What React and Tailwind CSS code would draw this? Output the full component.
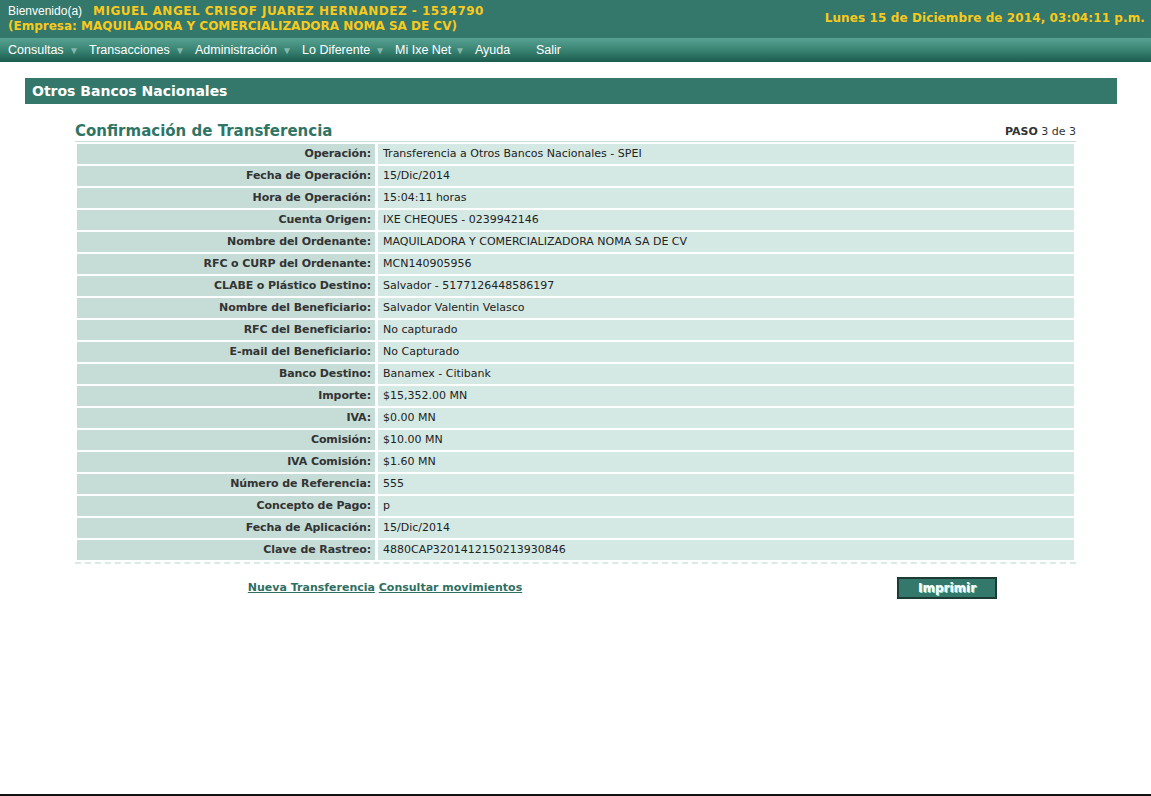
import React from "react";

const VERDANA = { fontFamily: "Verdana, 'DejaVu Sans', sans-serif" };

const MENU = [
  { label: "Consultas", arrow: true, w: "w-[81px]" },
  { label: "Transacciones", arrow: true, w: "w-[106px]" },
  { label: "Administración", arrow: true, w: "w-[107px]" },
  { label: "Lo Diferente", arrow: true, w: "w-[93px]" },
  { label: "Mi Ixe Net", arrow: true, w: "w-[80px]" },
  { label: "Ayuda", arrow: false, w: "w-[61px]" },
  { label: "Salir", arrow: false, w: "w-[40px]" },
];

const ROWS = [
  ["Operación:", "Transferencia a Otros Bancos Nacionales - SPEI"],
  ["Fecha de Operación:", "15/Dic/2014"],
  ["Hora de Operación:", "15:04:11 horas"],
  ["Cuenta Origen:", "IXE CHEQUES - 0239942146"],
  ["Nombre del Ordenante:", "MAQUILADORA Y COMERCIALIZADORA NOMA SA DE CV"],
  ["RFC o CURP del Ordenante:", "MCN140905956"],
  ["CLABE o Plástico Destino:", "Salvador - 5177126448586197"],
  ["Nombre del Beneficiario:", "Salvador Valentin Velasco"],
  ["RFC del Beneficiario:", "No capturado"],
  ["E-mail del Beneficiario:", "No Capturado"],
  ["Banco Destino:", "Banamex - Citibank"],
  ["Importe:", "$15,352.00 MN"],
  ["IVA:", "$0.00 MN"],
  ["Comisión:", "$10.00 MN"],
  ["IVA Comisión:", "$1.60 MN"],
  ["Número de Referencia:", "555"],
  ["Concepto de Pago:", "p"],
  ["Fecha de Aplicación:", "15/Dic/2014"],
  ["Clave de Rastreo:", "4880CAP3201412150213930846"],
];

function Header() {
  return (
    <div className="bg-[#33786a] h-[38px] flex justify-between pl-2 pr-[6px] pt-[3px]">
      <div className="text-[12px] leading-[15px]">
        <div>
          <span className="text-white font-['Liberation_Sans',Arial,sans-serif]">Bienvenido(a)</span>
          <span className="ml-[11px] font-bold text-[#f9c91c] tracking-[0.5px]" style={VERDANA}>
            MIGUEL ANGEL CRISOF JUAREZ HERNANDEZ - 1534790
          </span>
        </div>
        <div className="font-bold text-[#f9c91c]" style={VERDANA}>
          (Empresa: MAQUILADORA Y COMERCIALIZADORA NOMA SA DE CV)
        </div>
      </div>
      <div className="pt-[6px] text-[12px] font-bold text-[#f9c91c] tracking-[0.1px]" style={VERDANA}>
        Lunes 15 de Diciembre de 2014, 03:04:11 p.m.
      </div>
    </div>
  );
}

function MenuBar() {
  return (
    <div className="h-[24px] bg-gradient-to-b from-[#56a291] via-[#3a8474] to-[#1c5c4e] flex items-center pl-2 font-['Liberation_Sans',Arial,sans-serif] text-[12.5px] text-white">
      {MENU.map((m) => (
        <div key={m.label} className={`${m.w} flex items-center justify-between pr-[10px]`}>
          <span>{m.label}</span>
          {m.arrow && <span className="text-[10px] text-[#86b9ad]">▼</span>}
        </div>
      ))}
    </div>
  );
}

function DetailTable() {
  return (
    <div className="grid grid-cols-[298px_1fr] gap-x-[3px] gap-y-[2px] px-[2px] pt-[2px] text-[11px]" style={VERDANA}>
      {ROWS.map(([label, value]) => (
        <React.Fragment key={label}>
          <div className="h-[20px] bg-[#c5dcd7] text-right pr-[4px] font-bold text-[#333] leading-[20px] tracking-[-0.1px]">
            {label}
          </div>
          <div className="h-[20px] bg-[#d4e9e4] pl-[5px] text-[#222] leading-[20px]">{value}</div>
        </React.Fragment>
      ))}
    </div>
  );
}

export default function App() {
  return (
    <div className="h-[796px] bg-white border-b-2 border-[#111] flex flex-col">
      <Header />
      <MenuBar />
      <div className="mx-[25px] mt-[16px] w-[1092px] h-[26px] bg-[#33786a] pl-[7px] flex items-center">
        <span className="text-white font-bold text-[14px]" style={VERDANA}>
          Otros Bancos Nacionales
        </span>
      </div>
      <div className="ml-[75px] w-[1001px] mt-[17px]">
        <div className="flex justify-between items-end border-b border-[#c5dcd7]">
          <span className="text-[15px] font-bold text-[#2f7565] leading-[20px]" style={VERDANA}>
            Confirmación de Transferencia
          </span>
          <span className="text-[11px] text-[#333] mb-[1px]" style={VERDANA}>
            <b>PASO</b> 3 de 3
          </span>
        </div>
        <DetailTable />
        <div className="mt-[2px] border-b-2 border-dashed border-[#d8ebe6]" />
        <div className="flex items-center mt-[13px]">
          <div className="w-[620px] text-center text-[11px] font-bold text-[#2f6f62]" style={VERDANA}>
            <a className="underline">Nueva Transferencia</a>{" "}
            <a className="underline">Consultar movimientos</a>
          </div>
          <button
            className="ml-[202px] w-[100px] h-[22px] bg-[#33786a] border-2 border-[#1b3b34] text-white font-bold text-[12px] [text-shadow:1px_1px_0_#9fe6d8]"
            style={VERDANA}
          >
            Imprimir
          </button>
        </div>
      </div>
    </div>
  );
}
